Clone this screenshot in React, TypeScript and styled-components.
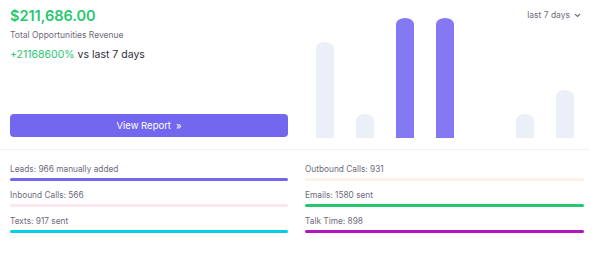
import styled, { createGlobalStyle } from 'styled-components';

const Global = createGlobalStyle`
  body {
    margin: 0;
    background: #fff;
    font-family: Inter, "Noto Sans", "Liberation Sans", sans-serif;
  }
`;

const Card = styled.div`
  width: 600px;
  height: 261px;
  background: #fff;
`;

const Top = styled.div`
  display: flex;
  width: 590px;
  height: 150px;
  box-sizing: border-box;
  border-bottom: 1px solid #f1f1f3;
`;

const Summary = styled.div`
  width: 278px;
  margin-left: 10px;
  padding: 7px 0 12px;
  box-sizing: border-box;
  display: flex;
  flex-direction: column;
`;

const Amount = styled.div`
  color: #28c76f;
  font-size: 14.5px;
  font-weight: 600;
  line-height: 18px;
`;

const Caption = styled.div`
  color: #6e6b7b;
  font-size: 8.5px;
  line-height: 11px;
  margin-top: 5px;
`;

const Change = styled.div`
  color: #2f2b3d;
  font-size: 10.5px;
  line-height: 14px;
  margin-top: 7px;
`;

const Up = styled.span`
  color: #28c76f;
`;

const ReportButton = styled.button`
  margin-top: auto;
  height: 23px;
  width: 100%;
  border: none;
  border-radius: 4px;
  background: #7367f0;
  color: #fff;
  font-family: inherit;
  font-size: 9.5px;
  display: flex;
  align-items: center;
  justify-content: center;
  gap: 5px;
`;

const ChartCol = styled.div`
  flex: 1;
  position: relative;
  padding: 0 0 11px 28px;
  display: flex;
  align-items: flex-end;
`;

const Range = styled.div`
  position: absolute;
  top: 10px;
  right: 9px;
  color: #6e6b7b;
  font-size: 8.5px;
  display: flex;
  align-items: center;
  gap: 4px;
`;

const Bars = styled.div`
  display: flex;
  align-items: flex-end;
  gap: 22px;
`;

const Bar = styled.div<{ $active: boolean }>`
  width: 18px;
  border-radius: 9px 9px 0 0 / 6px 6px 0 0;
  background: ${({ $active }) => ($active ? '#8479f2' : '#eaeff8')};
`;

const Stats = styled.div`
  display: grid;
  grid-template-columns: 278px 279px;
  column-gap: 17px;
  row-gap: 9px;
  padding: 14px 0 0 10px;
`;

const Stat = styled.div`
  display: flex;
  flex-direction: column;
  gap: 3px;
`;

const StatLabel = styled.div`
  color: #6e6b7b;
  font-size: 8.3px;
  line-height: 11px;
`;

const Track = styled.div<{ $color: string }>`
  height: 3px;
  border-radius: 2px;
  background: ${({ $color }) => $color};
`;

const bars = [96, 24, 120, 120, 0, 24, 48];

const stats = [
  { label: 'Leads: 966 manually added', color: '#7367f0' },
  { label: 'Outbound Calls: 931', color: '#fdf1e6' },
  { label: 'Inbound Calls: 566', color: '#fce8ec' },
  { label: 'Emails: 1580 sent', color: '#28c76f' },
  { label: 'Texts: 917 sent', color: '#00cfe8' },
  { label: 'Talk Time: 898', color: '#b216bf' },
];

export default function App() {
  return (
    <Card>
      <Global />
      <Top>
        <Summary>
          <Amount>$211,686.00</Amount>
          <Caption>Total Opportunities Revenue</Caption>
          <Change>
            <Up>+21168600%</Up> vs last 7 days
          </Change>
          <ReportButton type="button">
            View Report <span>»</span>
          </ReportButton>
        </Summary>
        <ChartCol>
          <Range>
            last 7 days
            <svg width="7" height="5" viewBox="0 0 7 5">
              <path d="M1 1l2.5 2.5L6 1" fill="none" stroke="#6e6b7b" strokeWidth="1.1" />
            </svg>
          </Range>
          <Bars>
            {bars.map((h, i) => (
              <Bar key={i} $active={i === 2 || i === 3} style={{ height: h }} />
            ))}
          </Bars>
        </ChartCol>
      </Top>
      <Stats>
        {stats.map((s) => (
          <Stat key={s.label}>
            <StatLabel>{s.label}</StatLabel>
            <Track $color={s.color} />
          </Stat>
        ))}
      </Stats>
    </Card>
  );
}
